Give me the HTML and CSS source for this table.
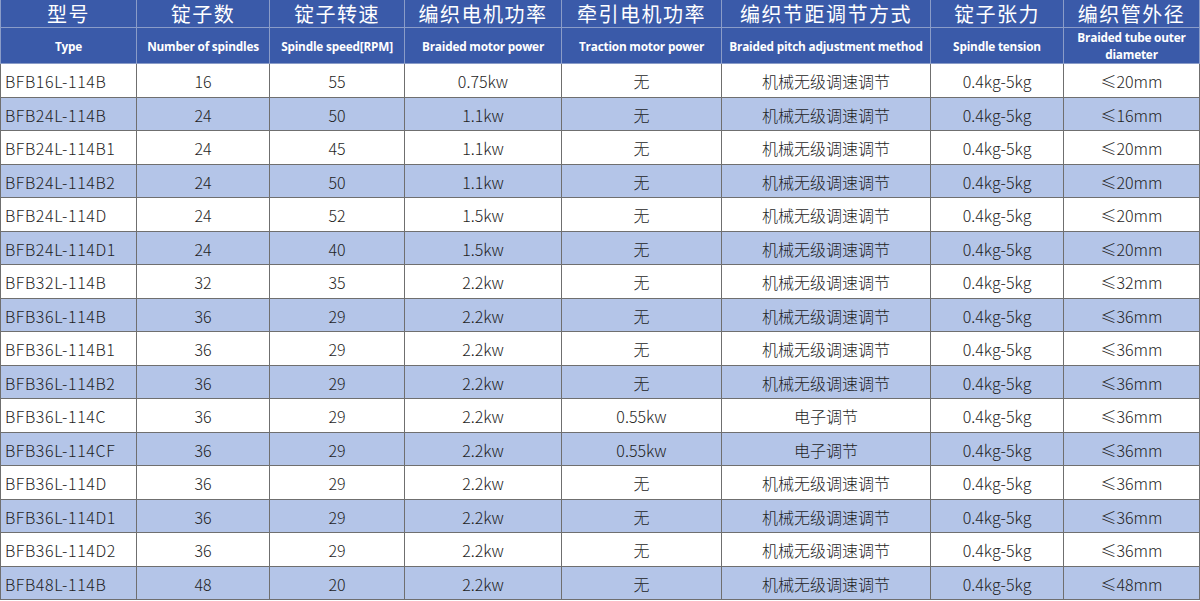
FILE: index.html
```html
<!DOCTYPE html>
<html lang="zh">
<head>
<meta charset="utf-8">
<link rel="stylesheet" href="styles.css">
</head>
<body>
<table class="spec">
  <colgroup>
    <col class="c1"><col class="c2"><col class="c3"><col class="c4"><col class="c5"><col class="c6"><col class="c7"><col class="c8">
  </colgroup>
  <thead>
    <tr class="zh">
      <th>型号</th><th>锭子数</th><th>锭子转速</th><th>编织电机功率</th><th>牵引电机功率</th><th>编织节距调节方式</th><th>锭子张力</th><th>编织管外径</th>
    </tr>
    <tr class="en">
      <th>Type</th><th>Number of spindles</th><th>Spindle speed[RPM]</th><th>Braided motor power</th><th>Traction motor power</th><th>Braided pitch adjustment method</th><th>Spindle tension</th><th class="two">Braided tube outer diameter</th>
    </tr>
  </thead>
  <tbody>
    <tr><td>BFB16L-114B</td><td>16</td><td>55</td><td>0.75kw</td><td>无</td><td>机械无级调速调节</td><td>0.4kg-5kg</td><td>≤20mm</td></tr>
    <tr class="alt"><td>BFB24L-114B</td><td>24</td><td>50</td><td>1.1kw</td><td>无</td><td>机械无级调速调节</td><td>0.4kg-5kg</td><td>≤16mm</td></tr>
    <tr><td>BFB24L-114B1</td><td>24</td><td>45</td><td>1.1kw</td><td>无</td><td>机械无级调速调节</td><td>0.4kg-5kg</td><td>≤20mm</td></tr>
    <tr class="alt"><td>BFB24L-114B2</td><td>24</td><td>50</td><td>1.1kw</td><td>无</td><td>机械无级调速调节</td><td>0.4kg-5kg</td><td>≤20mm</td></tr>
    <tr><td>BFB24L-114D</td><td>24</td><td>52</td><td>1.5kw</td><td>无</td><td>机械无级调速调节</td><td>0.4kg-5kg</td><td>≤20mm</td></tr>
    <tr class="alt"><td>BFB24L-114D1</td><td>24</td><td>40</td><td>1.5kw</td><td>无</td><td>机械无级调速调节</td><td>0.4kg-5kg</td><td>≤20mm</td></tr>
    <tr><td>BFB32L-114B</td><td>32</td><td>35</td><td>2.2kw</td><td>无</td><td>机械无级调速调节</td><td>0.4kg-5kg</td><td>≤32mm</td></tr>
    <tr class="alt"><td>BFB36L-114B</td><td>36</td><td>29</td><td>2.2kw</td><td>无</td><td>机械无级调速调节</td><td>0.4kg-5kg</td><td>≤36mm</td></tr>
    <tr><td>BFB36L-114B1</td><td>36</td><td>29</td><td>2.2kw</td><td>无</td><td>机械无级调速调节</td><td>0.4kg-5kg</td><td>≤36mm</td></tr>
    <tr class="alt"><td>BFB36L-114B2</td><td>36</td><td>29</td><td>2.2kw</td><td>无</td><td>机械无级调速调节</td><td>0.4kg-5kg</td><td>≤36mm</td></tr>
    <tr><td>BFB36L-114C</td><td>36</td><td>29</td><td>2.2kw</td><td>0.55kw</td><td>电子调节</td><td>0.4kg-5kg</td><td>≤36mm</td></tr>
    <tr class="alt"><td>BFB36L-114CF</td><td>36</td><td>29</td><td>2.2kw</td><td>0.55kw</td><td>电子调节</td><td>0.4kg-5kg</td><td>≤36mm</td></tr>
    <tr><td>BFB36L-114D</td><td>36</td><td>29</td><td>2.2kw</td><td>无</td><td>机械无级调速调节</td><td>0.4kg-5kg</td><td>≤36mm</td></tr>
    <tr class="alt"><td>BFB36L-114D1</td><td>36</td><td>29</td><td>2.2kw</td><td>无</td><td>机械无级调速调节</td><td>0.4kg-5kg</td><td>≤36mm</td></tr>
    <tr><td>BFB36L-114D2</td><td>36</td><td>29</td><td>2.2kw</td><td>无</td><td>机械无级调速调节</td><td>0.4kg-5kg</td><td>≤36mm</td></tr>
    <tr class="alt"><td>BFB48L-114B</td><td>48</td><td>20</td><td>2.2kw</td><td>无</td><td>机械无级调速调节</td><td>0.4kg-5kg</td><td>≤48mm</td></tr>
  </tbody>
</table>
</body>
</html>
```

FILE: styles.css
```css
html, body {
  margin: 0;
  padding: 0;
  background: #ffffff;
}

.spec {
  border-collapse: collapse;
  table-layout: fixed;
  width: 1199px;
  margin: 0;
  font-family: "Noto Sans CJK SC", "Noto Sans", sans-serif;
}

.c1 { width: 136px; }
.c2 { width: 133px; }
.c3 { width: 135px; }
.c4 { width: 157px; }
.c5 { width: 160px; }
.c6 { width: 209px; }
.c7 { width: 133px; }
.c8 { width: 136px; }

.spec th {
  background: #3a5aa9;
  color: #ffffff;
  border: 1px solid #8a9cc8;
  padding: 0;
  text-align: center;
  white-space: nowrap;
}

.spec .zh th {
  height: 27px;
  font-size: 20px;
  font-weight: 400;
  letter-spacing: 1.5px;
  line-height: 27px;
  border-top: none;
}

.spec .en th {
  height: 33px;
  padding-top: 1px;
  font-family: "Open Sans", "Noto Sans", sans-serif;
  font-size: 11.8px;
  font-weight: 700;
  letter-spacing: -0.2px;
  line-height: 14px;
}

.spec .en th.two {
  white-space: normal;
  padding: 1px 6px 0;
  line-height: 17px;
}

.spec td {
  height: 30.5px;
  padding: 2px 0 0;
  border: 1px solid #6f6f6f;
  text-align: center;
  font-size: 16px;
  font-weight: 300;
  color: #1e1e1e;
  white-space: nowrap;
  line-height: 20px;
}

.spec td:first-child {
  text-align: left;
  padding-left: 4px;
  letter-spacing: 0.6px;
}

.spec tr.alt td {
  background: #b4c5e8;
}
```
